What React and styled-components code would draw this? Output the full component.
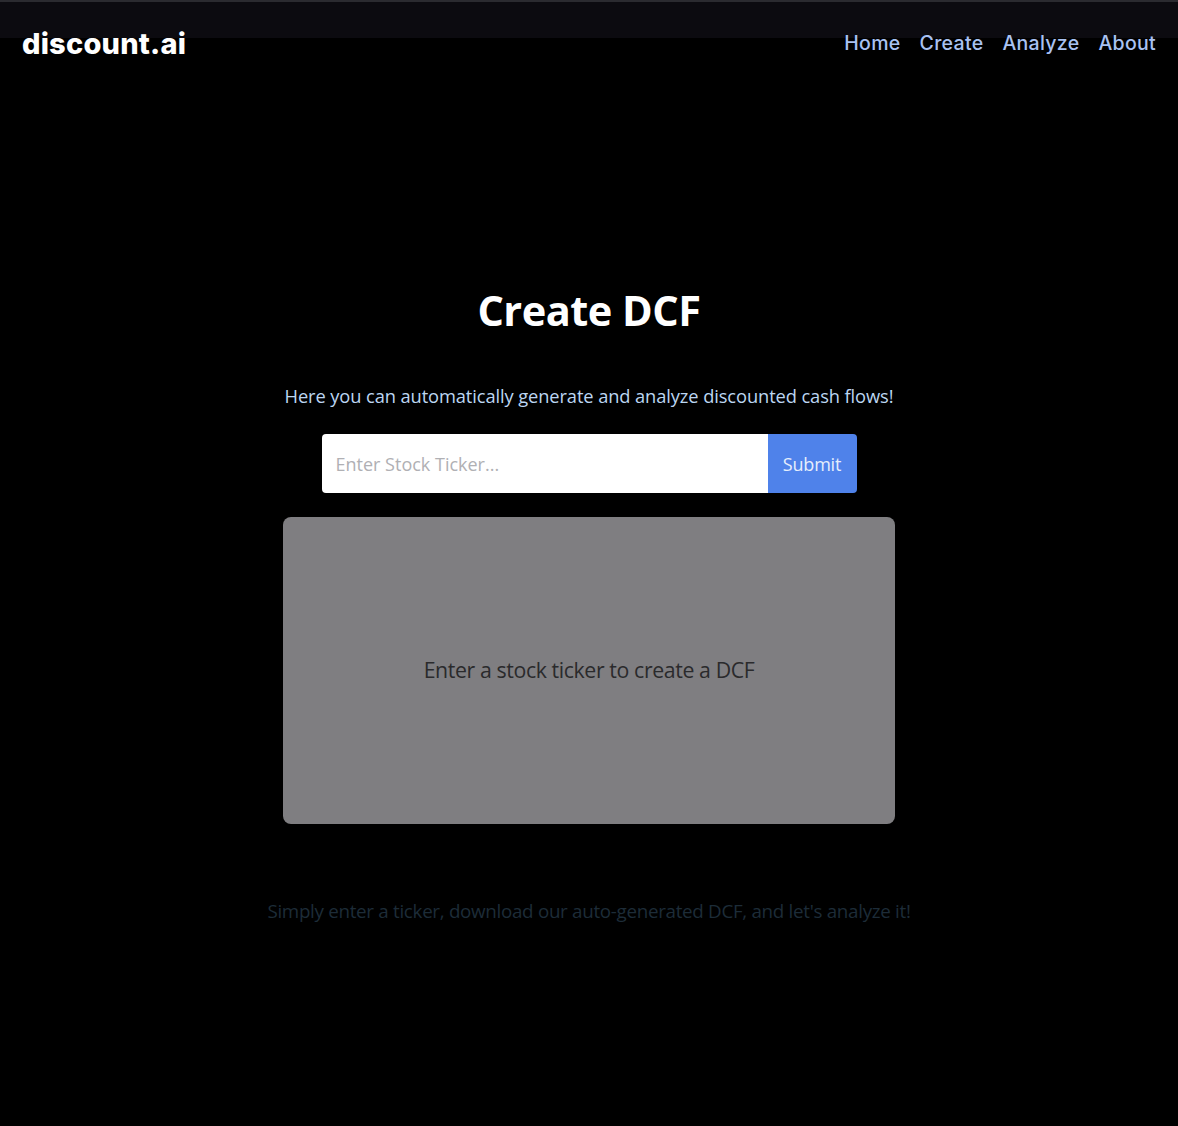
import styled, { createGlobalStyle } from "styled-components";

const GlobalStyle = createGlobalStyle`
  html, body {
    margin: 0;
    padding: 0;
    background: #000;
  }
  * {
    box-sizing: border-box;
  }
`;

export default function App() {
  return (
    <>
      <GlobalStyle />
      <Page>
        <Header>
          <Logo>discount.ai</Logo>
          <Nav>
            <a href="#home">Home</a>
            <a href="#create">Create</a>
            <a href="#analyze">Analyze</a>
            <a href="#about">About</a>
          </Nav>
        </Header>
        <Main>
          <Title>Create DCF</Title>
          <Subtitle>
            Here you can automatically generate and analyze discounted cash
            flows!
          </Subtitle>
          <Form onSubmit={(e) => e.preventDefault()}>
            <TickerInput type="text" placeholder="Enter Stock Ticker..." />
            <SubmitButton type="submit">Submit</SubmitButton>
          </Form>
          <ResultCard>
            <span>Enter a stock ticker to create a DCF</span>
          </ResultCard>
          <Footnote>
            Simply enter a ticker, download our auto-generated DCF, and let's
            analyze it!
          </Footnote>
        </Main>
      </Page>
    </>
  );
}

const Page = styled.div`
  width: 100%;
  min-height: 1126px;
  background: #000;
  color: #fff;
  font-family: "Open Sans", "Noto Sans", sans-serif;
`;
const Header = styled.header`
  display: flex;
  justify-content: space-between;
  align-items: flex-start;
  height: 86px;
  padding: 24px 22px 0;
  border-top: 2px solid #2b2b30;
  background: linear-gradient(#0c0b10 0 36px, #000 36px);
`;
const Logo = styled.div`
  font-family: "Inter", "Noto Sans", sans-serif;
  font-weight: 800;
  font-size: 29px;
  letter-spacing: 0.2px;
  color: #fff;
`;
const Nav = styled.nav`
  display: flex;
  gap: 19px;
  padding-top: 5px;
  a {
    font-family: "Inter", "Noto Sans", sans-serif;
    font-weight: 500;
    font-size: 19.5px;
    letter-spacing: 0.3px;
    color: #a9c2f2;
    text-decoration: none;
  }
`;
const Main = styled.main`
  display: flex;
  flex-direction: column;
  align-items: center;
  padding-top: 198px;
`;
const Title = styled.h1`
  margin: 0;
  font-size: 41.5px;
  font-weight: 700;
  line-height: 52px;
  letter-spacing: -0.5px;
`;
const Subtitle = styled.p`
  margin: 47px 0 0;
  font-size: 18.3px;
  line-height: 26px;
  letter-spacing: -0.1px;
  color: #bcd6f2;
`;
const Form = styled.form`
  display: flex;
  margin-top: 25px;
  width: 535px;
  height: 59px;
`;
const TickerInput = styled.input`
  flex: 1;
  border: none;
  outline: none;
  border-radius: 4px 0 0 4px;
  padding: 0 14px;
  font-family: "Open Sans", "Noto Sans", sans-serif;
  font-size: 18px;
  color: #333;
  background: #fff;
  &::placeholder {
    color: #b0b0b4;
  }
`;
const SubmitButton = styled.button`
  width: 89px;
  border: none;
  border-radius: 0 4px 4px 0;
  background: #4f82ea;
  color: #e6eefc;
  font-family: "Open Sans", "Noto Sans", sans-serif;
  font-size: 18px;
  letter-spacing: -0.2px;
  cursor: pointer;
`;
const ResultCard = styled.div`
  display: flex;
  align-items: center;
  justify-content: center;
  margin-top: 24px;
  width: 612px;
  height: 307px;
  border-radius: 8px;
  background: #7f7e81;
  span {
    font-size: 21.3px;
    letter-spacing: -0.4px;
    color: #2a2a2c;
    padding-bottom: 2px;
  }
`;
const Footnote = styled.p`
  margin: 74px 0 0;
  font-size: 18.8px;
  letter-spacing: -0.3px;
  color: #1d2c38;
`;
